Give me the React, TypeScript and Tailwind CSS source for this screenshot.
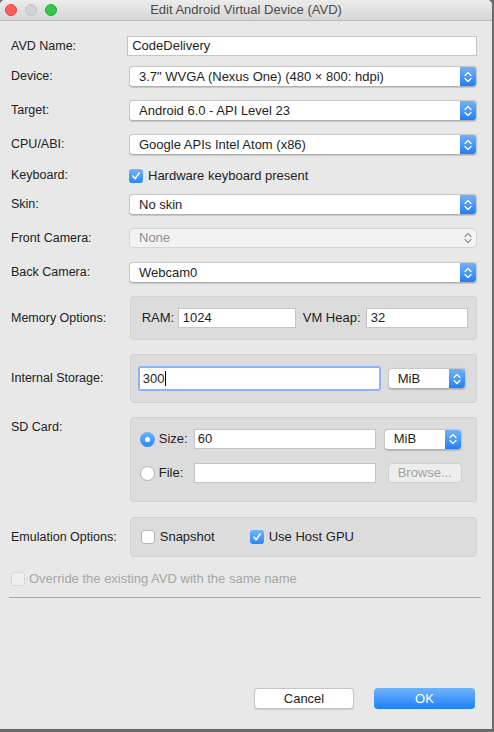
import React from 'react'

const font = { fontFamily: '"Liberation Sans", Arial, sans-serif' }

function Stepper({ disabled }: { disabled?: boolean }) {
  return (
    <svg width="8" height="12" viewBox="0 0 8 12" fill="none">
      <path
        d="M1 4.5 L4 1.5 L7 4.5 M1 7.5 L4 10.5 L7 7.5"
        stroke={disabled ? '#9a9a9a' : '#ffffff'}
        strokeWidth="1.3"
        strokeLinecap="round"
        strokeLinejoin="round"
      />
    </svg>
  )
}

function Select({ value, className = '', disabled }: { value: string; className?: string; disabled?: boolean }) {
  if (disabled) {
    return (
      <div className={`flex items-center rounded-[4px] border border-[#d4d4d4] bg-[#f2f2f2] ${className}`}>
        <span className="flex-1 pl-[9px] text-[13px] text-[#8e8e8e]">{value}</span>
        <span className="flex w-[16px] justify-center">
          <Stepper disabled />
        </span>
      </div>
    )
  }
  return (
    <div
      className={`flex items-stretch overflow-hidden rounded-[4px] border border-[#c8c8c8] border-b-[#b0b0b0] bg-white shadow-[0_0.5px_1px_rgba(0,0,0,0.15)] ${className}`}
    >
      <span className="flex flex-1 items-center pl-[9px] text-[13px] text-[#1e1e1e]">{value}</span>
      <span className="flex w-[16px] items-center justify-center bg-gradient-to-b from-[#6fb1fb] to-[#1d7ff9]">
        <Stepper />
      </span>
    </div>
  )
}

function Input({ value = '', className = '' }: { value?: string; className?: string }) {
  return (
    <div className={`flex items-center border border-[#c4c4c4] bg-white pl-[3px] text-[13px] text-[#1e1e1e] ${className}`}>
      {value}
    </div>
  )
}

function Check({ checked, disabled }: { checked?: boolean; disabled?: boolean }) {
  if (checked) {
    return (
      <span className="flex h-[14px] w-[14px] items-center justify-center rounded-[3px] bg-gradient-to-b from-[#6fb3fb] to-[#2a86f9]">
        <svg width="10" height="10" viewBox="0 0 10 10" fill="none">
          <path d="M2 5.2 L4.2 7.6 L8.2 2" stroke="#fff" strokeWidth="1.6" strokeLinecap="round" strokeLinejoin="round" />
        </svg>
      </span>
    )
  }
  return (
    <span
      className={`h-[14px] w-[14px] rounded-[3px] border ${
        disabled ? 'border-[#d6d6d6] bg-[#efefef]' : 'border-[#b5b5b5] bg-white'
      }`}
    />
  )
}

function Row({ label, children, top }: { label: string; children: React.ReactNode; top: string }) {
  return (
    <div className={`flex items-center ${top}`}>
      <span className="w-[118px] text-[12.5px] text-[#222]">{label}</span>
      {children}
    </div>
  )
}

export default function App() {
  return (
    <div className="h-[732px] w-[494px] bg-[#6a6a6a]" style={font}>
      <div className="flex h-[729px] w-[492px] flex-col overflow-hidden rounded-t-[5px] bg-[#e8e8e8]">
        {/* title bar */}
        <div className="relative flex h-[21px] items-center justify-center border-b border-[#b9b9b9] bg-gradient-to-b from-[#ececec] to-[#d6d6d6]">
          <div className="absolute left-[5px] top-[4px] flex gap-[8px]">
            <span className="h-[12px] w-[12px] rounded-full border border-[#e0443e] bg-[#fc605c]" />
            <span className="h-[12px] w-[12px] rounded-full border border-[#c4c4c4] bg-[#d3d3d3]" />
            <span className="h-[12px] w-[12px] rounded-full border border-[#2aa83b] bg-[#34c84a]" />
          </div>
          <span className="text-[13px] text-[#4a4a4a]">Edit Android Virtual Device (AVD)</span>
        </div>

        <div className="flex flex-1 flex-col pl-[11px] pr-[15px]">
          <Row label="AVD Name:" top="mt-[15px]">
            <Input value="CodeDelivery" className="h-[20px] w-[352px] -ml-[1px] pl-[4px]" />
          </Row>
          <Row label="Device:" top="mt-[10px]">
            <Select value={'3.7" WVGA (Nexus One) (480 \u00d7 800: hdpi)'} className="h-[21px] w-[348px]" />
          </Row>
          <Row label="Target:" top="mt-[13px]">
            <Select value="Android 6.0 - API Level 23" className="h-[21px] w-[348px]" />
          </Row>
          <Row label="CPU/ABI:" top="mt-[13px]">
            <Select value="Google APIs Intel Atom (x86)" className="h-[21px] w-[348px]" />
          </Row>
          <Row label="Keyboard:" top="mt-[10px]">
            <div className="flex h-[21px] items-center gap-[5px]">
              <Check checked />
              <span className="text-[13px] text-[#1e1e1e]">Hardware keyboard present</span>
            </div>
          </Row>
          <Row label="Skin:" top="mt-[8px]">
            <Select value="No skin" className="h-[21px] w-[348px]" />
          </Row>
          <Row label="Front Camera:" top="mt-[13px]">
            <Select value="None" disabled className="h-[20px] w-[348px]" />
          </Row>
          <Row label="Back Camera:" top="mt-[14px]">
            <Select value="Webcam0" className="h-[21px] w-[348px]" />
          </Row>

          <Row label="Memory Options:" top="mt-[13px]">
            <div className="ml-[1px] flex h-[44px] w-[348px] items-center rounded-[4px] border border-[#d2d2d2] bg-[#dcdcdc] pl-[11px] text-[13px] text-[#1e1e1e]">
              <span className="w-[36px]">RAM:</span>
              <Input value="1024" className="h-[20px] w-[118px] pl-[4px]" />
              <span className="ml-[7px] w-[63px]">VM Heap:</span>
              <Input value="32" className="h-[20px] w-[102px] pl-[4px]" />
            </div>
          </Row>

          <Row label="Internal Storage:" top="mt-[14px]">
            <div className="ml-[1px] flex h-[49px] w-[348px] items-center rounded-[4px] border border-[#d2d2d2] bg-[#dcdcdc] pl-[7px] text-[13px] text-[#1e1e1e]">
              <div className="flex h-[25px] w-[243px] items-center rounded-[3px] bg-[#8cb6f2] p-[2px]">
                <div className="flex h-full w-full items-center bg-white pl-[3px]">
                  300<span className="ml-[1px] h-[15px] w-[1px] bg-black" />
                </div>
              </div>
              <Select value="MiB" className="ml-[7px] h-[21px] w-[78px]" />
            </div>
          </Row>

          <div className="mt-[14px] flex items-start">
            <span className="mt-[1px] w-[118px] text-[12.5px] text-[#222]">SD Card:</span>
            <div className="ml-[1px] flex h-[85px] w-[348px] flex-col rounded-[4px] border border-[#d2d2d2] bg-[#dcdcdc] pl-[9px] text-[13px] text-[#1e1e1e]">
              <div className="mt-[11px] flex h-[20px] items-center">
                <span className="flex h-[15px] w-[15px] items-center justify-center rounded-full bg-gradient-to-b from-[#6fb3fb] to-[#2a86f9]">
                  <span className="h-[5px] w-[5px] rounded-full bg-white" />
                </span>
                <span className="ml-[4px] w-[35px]">Size:</span>
                <Input value="60" className="h-[20px] w-[182px] pl-[3px]" />
                <Select value="MiB" className="ml-[8px] h-[21px] w-[78px]" />
              </div>
              <div className="mt-[14px] flex h-[20px] items-center">
                <span className="h-[15px] w-[15px] rounded-full border border-[#b0b0b0] bg-white" />
                <span className="ml-[4px] w-[35px]">File:</span>
                <Input className="h-[20px] w-[182px]" />
                <div className="ml-[12px] flex h-[20px] w-[74px] items-center justify-center rounded-[4px] border border-[#d0d0d0] bg-[#ededed] text-[#a3a3a3]">
                  Browse...
                </div>
              </div>
            </div>
          </div>

          <Row label="Emulation Options:" top="mt-[15px]">
            <div className="ml-[1px] flex h-[40px] w-[348px] items-center rounded-[4px] border border-[#d2d2d2] bg-[#dcdcdc] pl-[10px] text-[13px] text-[#1e1e1e]">
              <Check />
              <span className="ml-[5px] w-[90px]">Snapshot</span>
              <Check checked />
              <span className="ml-[5px]">Use Host GPU</span>
            </div>
          </Row>

          <div className="mt-[12px] flex h-[20px] items-center gap-[4px]">
            <Check disabled />
            <span className="text-[13px] text-[#a6a6a6]">Override the existing AVD with the same name</span>
          </div>
          <div className="-ml-[2px] mt-[8px] h-[1px] w-[472px] bg-[#a9a9a9]" />

          <div className="mt-[90px] flex justify-end gap-[20px] pr-[2px]">
            <button className="h-[21px] w-[100px] rounded-[4px] border border-[#c4c4c4] bg-white text-[13px] text-[#1e1e1e] shadow-[0_0.5px_1px_rgba(0,0,0,0.12)]">
              Cancel
            </button>
            <button className="h-[21px] w-[101px] rounded-[4px] bg-gradient-to-b from-[#6cb3fa] to-[#1a80fa] text-[13px] text-white">
              OK
            </button>
          </div>
        </div>
      </div>
    </div>
  )
}
